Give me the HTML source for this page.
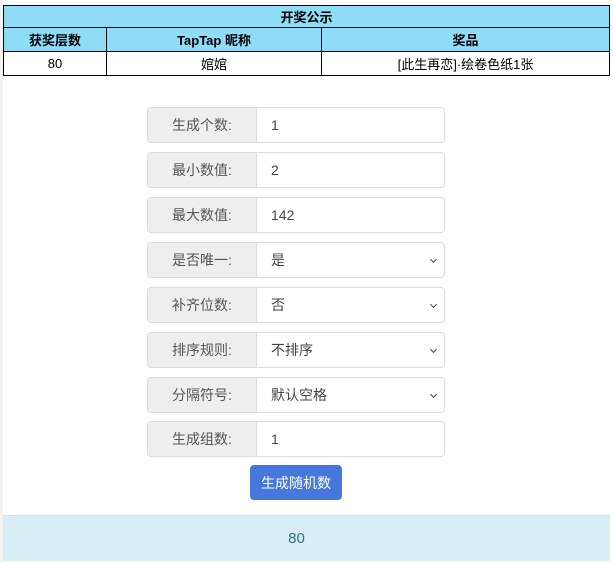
<!DOCTYPE html>
<html><head><meta charset="utf-8"><style>
*{box-sizing:border-box;margin:0;padding:0}
body{width:613px;height:563px;background:#fff;font-family:"Liberation Sans","Noto Sans CJK SC",sans-serif;position:relative;overflow:hidden}
table{position:absolute;left:3px;top:5px;width:607px;border-collapse:collapse;font-size:13px;color:#000}
td{border:1px solid #000;text-align:center;height:24px;padding:0}
.h td{background:#8fdcf7;font-weight:bold}
.grp{position:absolute;left:147px;width:298px;height:36px;border:1px solid #ddd;border-radius:4px;display:flex;overflow:hidden;font-size:14px;color:#555}
.lab{width:109px;background:#eee;border-right:1px solid #ddd;display:flex;align-items:center;justify-content:center}
.val{flex:1;display:flex;align-items:center;padding-left:14px;position:relative;color:#444}
.chev{position:absolute;right:8px;top:14px;width:5px;height:5px;border-right:1.5px solid #444;border-bottom:1.5px solid #444;transform:rotate(45deg)}
.btn{position:absolute;left:250px;top:465px;width:92px;height:35px;background:#4677dc;color:#fff;border-radius:4px;font-size:14px;display:flex;align-items:center;justify-content:center}
.res{position:absolute;left:3px;top:515px;width:607px;height:46px;background:#d9edf7;border-top:1px solid #c6e3f0;color:#31708f;font-size:15px;display:flex;align-items:center;justify-content:center;padding-right:20px}
.gl{position:absolute;left:0;top:0;width:3px;height:563px;background:#f3f3f3}
</style></head><body>
<div class="gl"></div>
<table>
<tr class="h"><td colspan="3" style="height:22px">开奖公示</td></tr>
<tr class="h"><td style="width:103px">获奖层数</td><td style="width:215px">TapTap 昵称</td><td>奖品</td></tr>
<tr><td>80</td><td>婠婠</td><td>[此生再恋]·绘卷色纸1张</td></tr>
</table>
<div class="grp" style="top:107px"><div class="lab">生成个数:</div><div class="val">1</div></div>
<div class="grp" style="top:152px"><div class="lab">最小数值:</div><div class="val">2</div></div>
<div class="grp" style="top:197px"><div class="lab">最大数值:</div><div class="val">142</div></div>
<div class="grp" style="top:242px"><div class="lab">是否唯一:</div><div class="val">是<span class="chev"></span></div></div>
<div class="grp" style="top:287px"><div class="lab">补齐位数:</div><div class="val">否<span class="chev"></span></div></div>
<div class="grp" style="top:332px"><div class="lab">排序规则:</div><div class="val">不排序<span class="chev"></span></div></div>
<div class="grp" style="top:377px"><div class="lab">分隔符号:</div><div class="val">默认空格<span class="chev"></span></div></div>
<div class="grp" style="top:421px"><div class="lab">生成组数:</div><div class="val">1</div></div>
<div class="btn">生成随机数</div>
<div class="res">80</div>
</body></html>
